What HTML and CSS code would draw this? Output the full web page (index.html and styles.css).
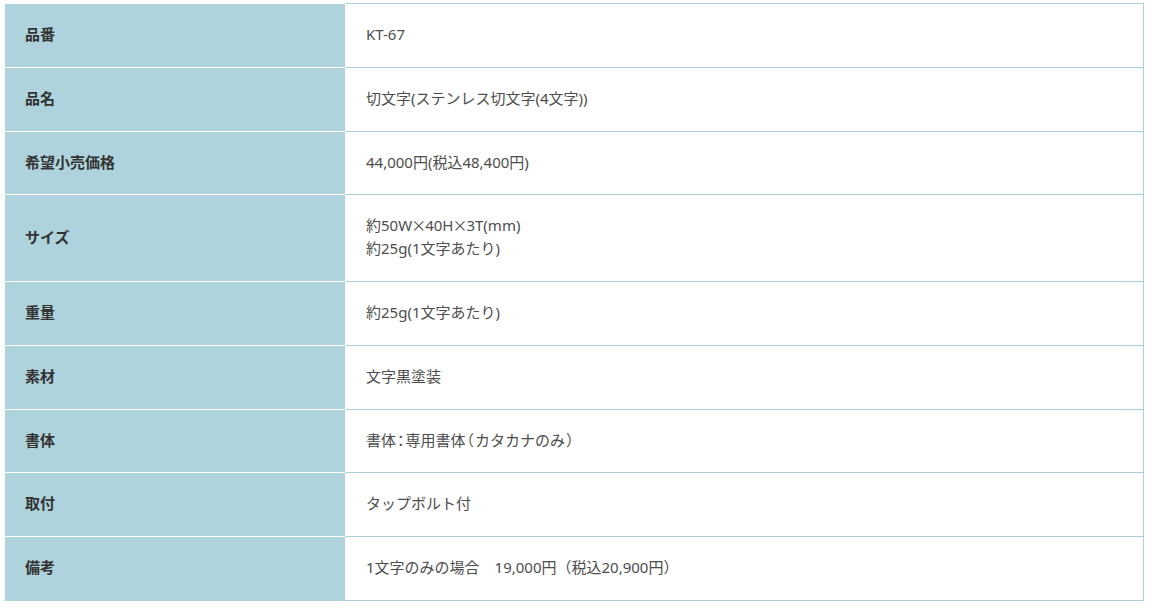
FILE: index.html
```html
<!DOCTYPE html>
<html lang="ja">
<head>
<meta charset="utf-8">
<title>仕様</title>
<link rel="stylesheet" href="styles.css">
</head>
<body>
<div class="wrap">
<table class="spec">
<tbody>
<tr><th>品番</th><td>KT-67</td></tr>
<tr><th>品名</th><td>切文字(ステンレス切文字(4文字))</td></tr>
<tr><th>希望小売価格</th><td>44,000円(税込48,400円)</td></tr>
<tr><th>サイズ</th><td>約50W<span class="x">×</span>40H<span class="x">×</span>3T(mm)<br>約25g(1文字あたり)</td></tr>
<tr><th>重量</th><td>約25g(1文字あたり)</td></tr>
<tr><th>素材</th><td>文字黒塗装</td></tr>
<tr><th>書体</th><td>書体<span class="p">：</span>専用書体<span class="p">（</span>カタカナのみ<span class="p">）</span></td></tr>
<tr><th>取付</th><td>タップボルト付</td></tr>
<tr><th>備考</th><td>1文字のみの場合　19,000円（税込20,900円）</td></tr>
</tbody>
</table>
</div>
</body>
</html>
```
FILE: styles.css
```css
html, body {
  margin: 0;
  padding: 0;
  background: #ffffff;
}
.wrap {
  padding: 3px 8px 0 4px;
}
.spec {
  width: 1140px;
  border-collapse: separate;
  border-spacing: 0;
  font-family: "Noto Sans", "Noto Sans CJK JP", sans-serif;
  font-size: 15px;
  line-height: 22.8px;
}
.spec th {
  width: 300px;
  padding: 19px 20px 21px;
  text-align: left;
  vertical-align: middle;
  background: #afd3dc;
  color: #333333;
  font-weight: bold;
  border-top: 1px solid #ffffff;
  border-left: 1px solid #ffffff;
}
.spec td {
  padding: 19px 20px 21px 21px;
  text-align: left;
  vertical-align: middle;
  color: #4d4d4d;
  font-weight: normal;
  border-top: 1px solid #a9d1da;
  border-right: 1px solid #a9d1da;
}
.spec .p {
  font-feature-settings: "halt";
  margin: 0 1px;
}
.spec .x {
  font-family: "Noto Sans CJK JP", sans-serif;
  margin: 0 -1px;
}
.spec tr:last-child th {
  border-bottom: 1px solid #afd3dc;
}
.spec tr:last-child td {
  border-bottom: 1px solid #a9d1da;
}
```
